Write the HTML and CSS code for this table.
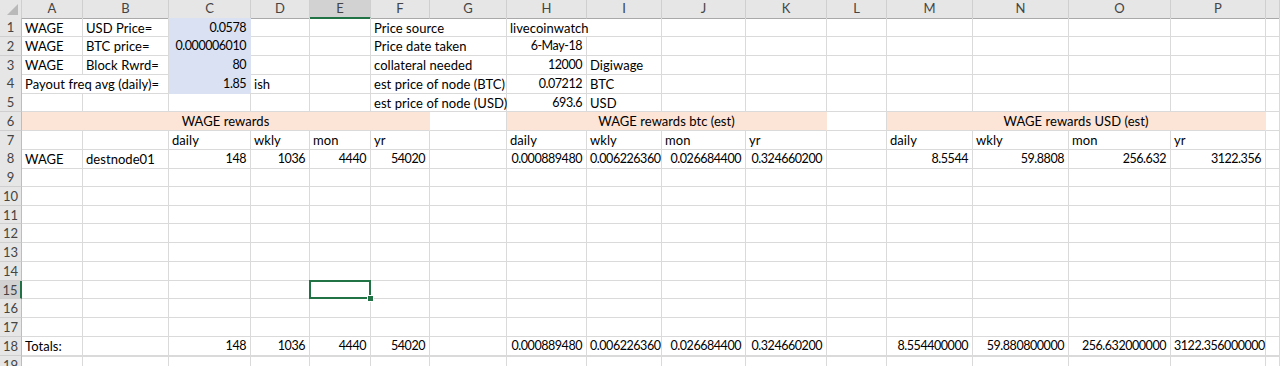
FILE: index.html
```html
<!DOCTYPE html>
<html>
	<head>
		<meta charset="utf-8" />
		<title>destnode01 rewards</title>
		<link rel="stylesheet" href="styles.css">
	</head>
	<body>
		<div class="sheet">
			<!-- column letters -->
			<div class="row head">
				<div class="corner"></div>
				<div>A</div><div>B</div><div>C</div><div>D</div><div class="sel">E</div><div>F</div><div>G</div><div>H</div>
				<div>I</div><div>J</div><div>K</div><div>L</div><div>M</div><div>N</div><div>O</div><div>P</div><div></div>
			</div>

			<!-- inputs and price info -->
			<div class="row">
				<div class="num">1</div>
				<div>WAGE</div><div>USD Price=</div><div class="blue r">0.0578</div><div></div><div></div>
				<div class="span2">Price source</div><div class="span2">livecoinwatch</div>
				<div></div><div></div><div></div><div></div><div></div><div></div><div></div><div></div>
			</div>
			<div class="row">
				<div class="num">2</div>
				<div>WAGE</div><div>BTC price=</div><div class="blue r">0.000006010</div><div></div><div></div>
				<div class="span2">Price date taken</div><div class="r">6-May-18</div><div></div>
				<div></div><div></div><div></div><div></div><div></div><div></div><div></div><div></div>
			</div>
			<div class="row">
				<div class="num">3</div>
				<div>WAGE</div><div>Block Rwrd=</div><div class="blue r">80</div><div></div><div></div>
				<div class="span2">collateral needed</div><div class="r">12000</div><div>Digiwage</div>
				<div></div><div></div><div></div><div></div><div></div><div></div><div></div><div></div>
			</div>
			<div class="row">
				<div class="num">4</div>
				<div class="span2">Payout freq avg (daily)=</div><div class="blue r">1.85</div><div>ish</div><div></div>
				<div class="span2">est price of node (BTC)</div><div class="r">0.07212</div><div>BTC</div>
				<div></div><div></div><div></div><div></div><div></div><div></div><div></div><div></div>
			</div>
			<div class="row">
				<div class="num">5</div>
				<div></div><div></div><div></div><div></div><div></div>
				<div class="span2">est price of node (USD)</div><div class="r">693.6</div><div>USD</div>
				<div></div><div></div><div></div><div></div><div></div><div></div><div></div><div></div>
			</div>

			<!-- section titles -->
			<div class="row">
				<div class="num">6</div>
				<div class="band span6">WAGE rewards</div><div></div>
				<div class="band span4">WAGE rewards btc (est)</div><div></div>
				<div class="band span4">WAGE rewards USD (est)</div><div></div>
			</div>
			<div class="row">
				<div class="num">7</div>
				<div></div><div></div><div>daily</div><div>wkly</div><div>mon</div><div>yr</div><div></div>
				<div>daily</div><div>wkly</div><div>mon</div><div>yr</div><div></div>
				<div>daily</div><div>wkly</div><div>mon</div><div>yr</div><div></div>
			</div>
			<div class="row">
				<div class="num">8</div>
				<div>WAGE</div><div>destnode01</div><div class="r">148</div><div class="r">1036</div><div class="r">4440</div><div class="r">54020</div><div></div>
				<div class="r">0.000889480</div><div class="r">0.006226360</div><div class="r">0.026684400</div><div class="r">0.324660200</div><div></div>
				<div class="r">8.5544</div><div class="r">59.8808</div><div class="r">256.632</div><div class="r">3122.356</div><div></div>
			</div>

			<!-- empty rows -->
			<div class="row"><div class="num">9</div><div></div><div></div><div></div><div></div><div></div><div></div><div></div><div></div><div></div><div></div><div></div><div></div><div></div><div></div><div></div><div></div><div></div></div>
			<div class="row"><div class="num">10</div><div></div><div></div><div></div><div></div><div></div><div></div><div></div><div></div><div></div><div></div><div></div><div></div><div></div><div></div><div></div><div></div><div></div></div>
			<div class="row"><div class="num">11</div><div></div><div></div><div></div><div></div><div></div><div></div><div></div><div></div><div></div><div></div><div></div><div></div><div></div><div></div><div></div><div></div><div></div></div>
			<div class="row"><div class="num">12</div><div></div><div></div><div></div><div></div><div></div><div></div><div></div><div></div><div></div><div></div><div></div><div></div><div></div><div></div><div></div><div></div><div></div></div>
			<div class="row"><div class="num">13</div><div></div><div></div><div></div><div></div><div></div><div></div><div></div><div></div><div></div><div></div><div></div><div></div><div></div><div></div><div></div><div></div><div></div></div>
			<div class="row"><div class="num">14</div><div></div><div></div><div></div><div></div><div></div><div></div><div></div><div></div><div></div><div></div><div></div><div></div><div></div><div></div><div></div><div></div><div></div></div>
			<div class="row"><div class="num sel">15</div><div></div><div></div><div></div><div></div><div class="active"></div><div></div><div></div><div></div><div></div><div></div><div></div><div></div><div></div><div></div><div></div><div></div><div></div></div>
			<div class="row"><div class="num">16</div><div></div><div></div><div></div><div></div><div></div><div></div><div></div><div></div><div></div><div></div><div></div><div></div><div></div><div></div><div></div><div></div><div></div></div>
			<div class="row"><div class="num">17</div><div></div><div></div><div></div><div></div><div></div><div></div><div></div><div></div><div></div><div></div><div></div><div></div><div></div><div></div><div></div><div></div><div></div></div>

			<!-- totals -->
			<div class="row total">
				<div class="num">18</div>
				<div>Totals:</div><div></div><div class="r">148</div><div class="r">1036</div><div class="r">4440</div><div class="r">54020</div><div></div>
				<div class="r">0.000889480</div><div class="r">0.006226360</div><div class="r">0.026684400</div><div class="r">0.324660200</div><div></div>
				<div class="r">8.554400000</div><div class="r">59.880800000</div><div class="r">256.632000000</div><div class="r">3122.356000000</div><div></div>
			</div>
			<div class="row"><div class="num">19</div><div></div><div></div><div></div><div></div><div></div><div></div><div></div><div></div><div></div><div></div><div></div><div></div><div></div><div></div><div></div><div></div><div></div></div>
		</div>
	</body>
</html>
```

FILE: styles.css
```css
body {
	margin: 0;
	background: #fff;
	font-family: Lato, "Liberation Sans", sans-serif;
	font-size: 13px;
	letter-spacing: 0.05px;
	color: #000;
}
.sheet {
	width: 1280px;
	height: 366px;
	overflow: hidden;
}
.row {
	display: grid;
	grid-template-columns: 22px 61px 86px 82px 59px 61px 59px 77px 80px 75px 84px 81px 60px 86px 96px 102px 95px 1fr;
	height: 18.75px;
}
.row > div {
	box-sizing: border-box;
	border-right: 1px solid #dadada;
	border-bottom: 1px solid #dadada;
	padding: 1.5px 3px 0;
	line-height: 16.75px;
	white-space: nowrap;
	overflow: visible;
}
.row > .r {
	text-align: right;
	font-size: 12.5px;
	letter-spacing: -0.45px;
	padding: 1.5px 4px 0 3px;
}
.span2 { grid-column: span 2; }
.span4 { grid-column: span 4; }
.span6 { grid-column: span 6; }
.total > div { border-bottom: 2px solid #dadada; }

/* fills */
.row > .blue {
	background: #d9e1f2;
	border-color: #d9e1f2;
}
.row > .band {
	background: #fce4d6;
	border-right-color: #fce4d6;
	text-align: center;
}

/* headers */
.head { height: 18px; }
.head > div {
	background: #e6e6e6;
	color: #444;
	font-size: 13px;
	letter-spacing: 0;
	text-align: center;
	line-height: 17px;
	padding: 0;
	border-right-color: #cfcfcf;
	border-bottom-color: #a9a9a9;
}
.row > .num {
	background: #e6e6e6;
	color: #444;
	font-size: 13px;
	letter-spacing: 0;
	text-align: center;
	padding: 1px 0 0;
	border-right-color: #bdbdbd;
	border-bottom-color: #cfcfcf;
}
.row > .sel {
	background: #d2d2d2;
}
.head > .sel { border-bottom: 2px solid #217346; }
.row > .num.sel { border-right: 2px solid #217346; }
.corner {
	display: flex;
	justify-content: flex-end;
	align-items: flex-end;
}
.corner::after {
	content: "";
	width: 11px;
	height: 11px;
	margin: 0 3px 3px 0;
	background: #b9b9b9;
	clip-path: polygon(100% 0, 100% 100%, 0 100%);
}

/* active cell with fill handle */
.active {
	position: relative;
	z-index: 1;
}
.active::after {
	content: "";
	position: absolute;
	top: -1px;
	left: -1px;
	right: -1px;
	bottom: -1px;
	border: 2px solid #217346;
}
.active::before {
	content: "";
	position: absolute;
	right: -4px;
	bottom: -4px;
	width: 5px;
	height: 5px;
	background: #217346;
	border: 1px solid #fff;
	z-index: 2;
}
```
